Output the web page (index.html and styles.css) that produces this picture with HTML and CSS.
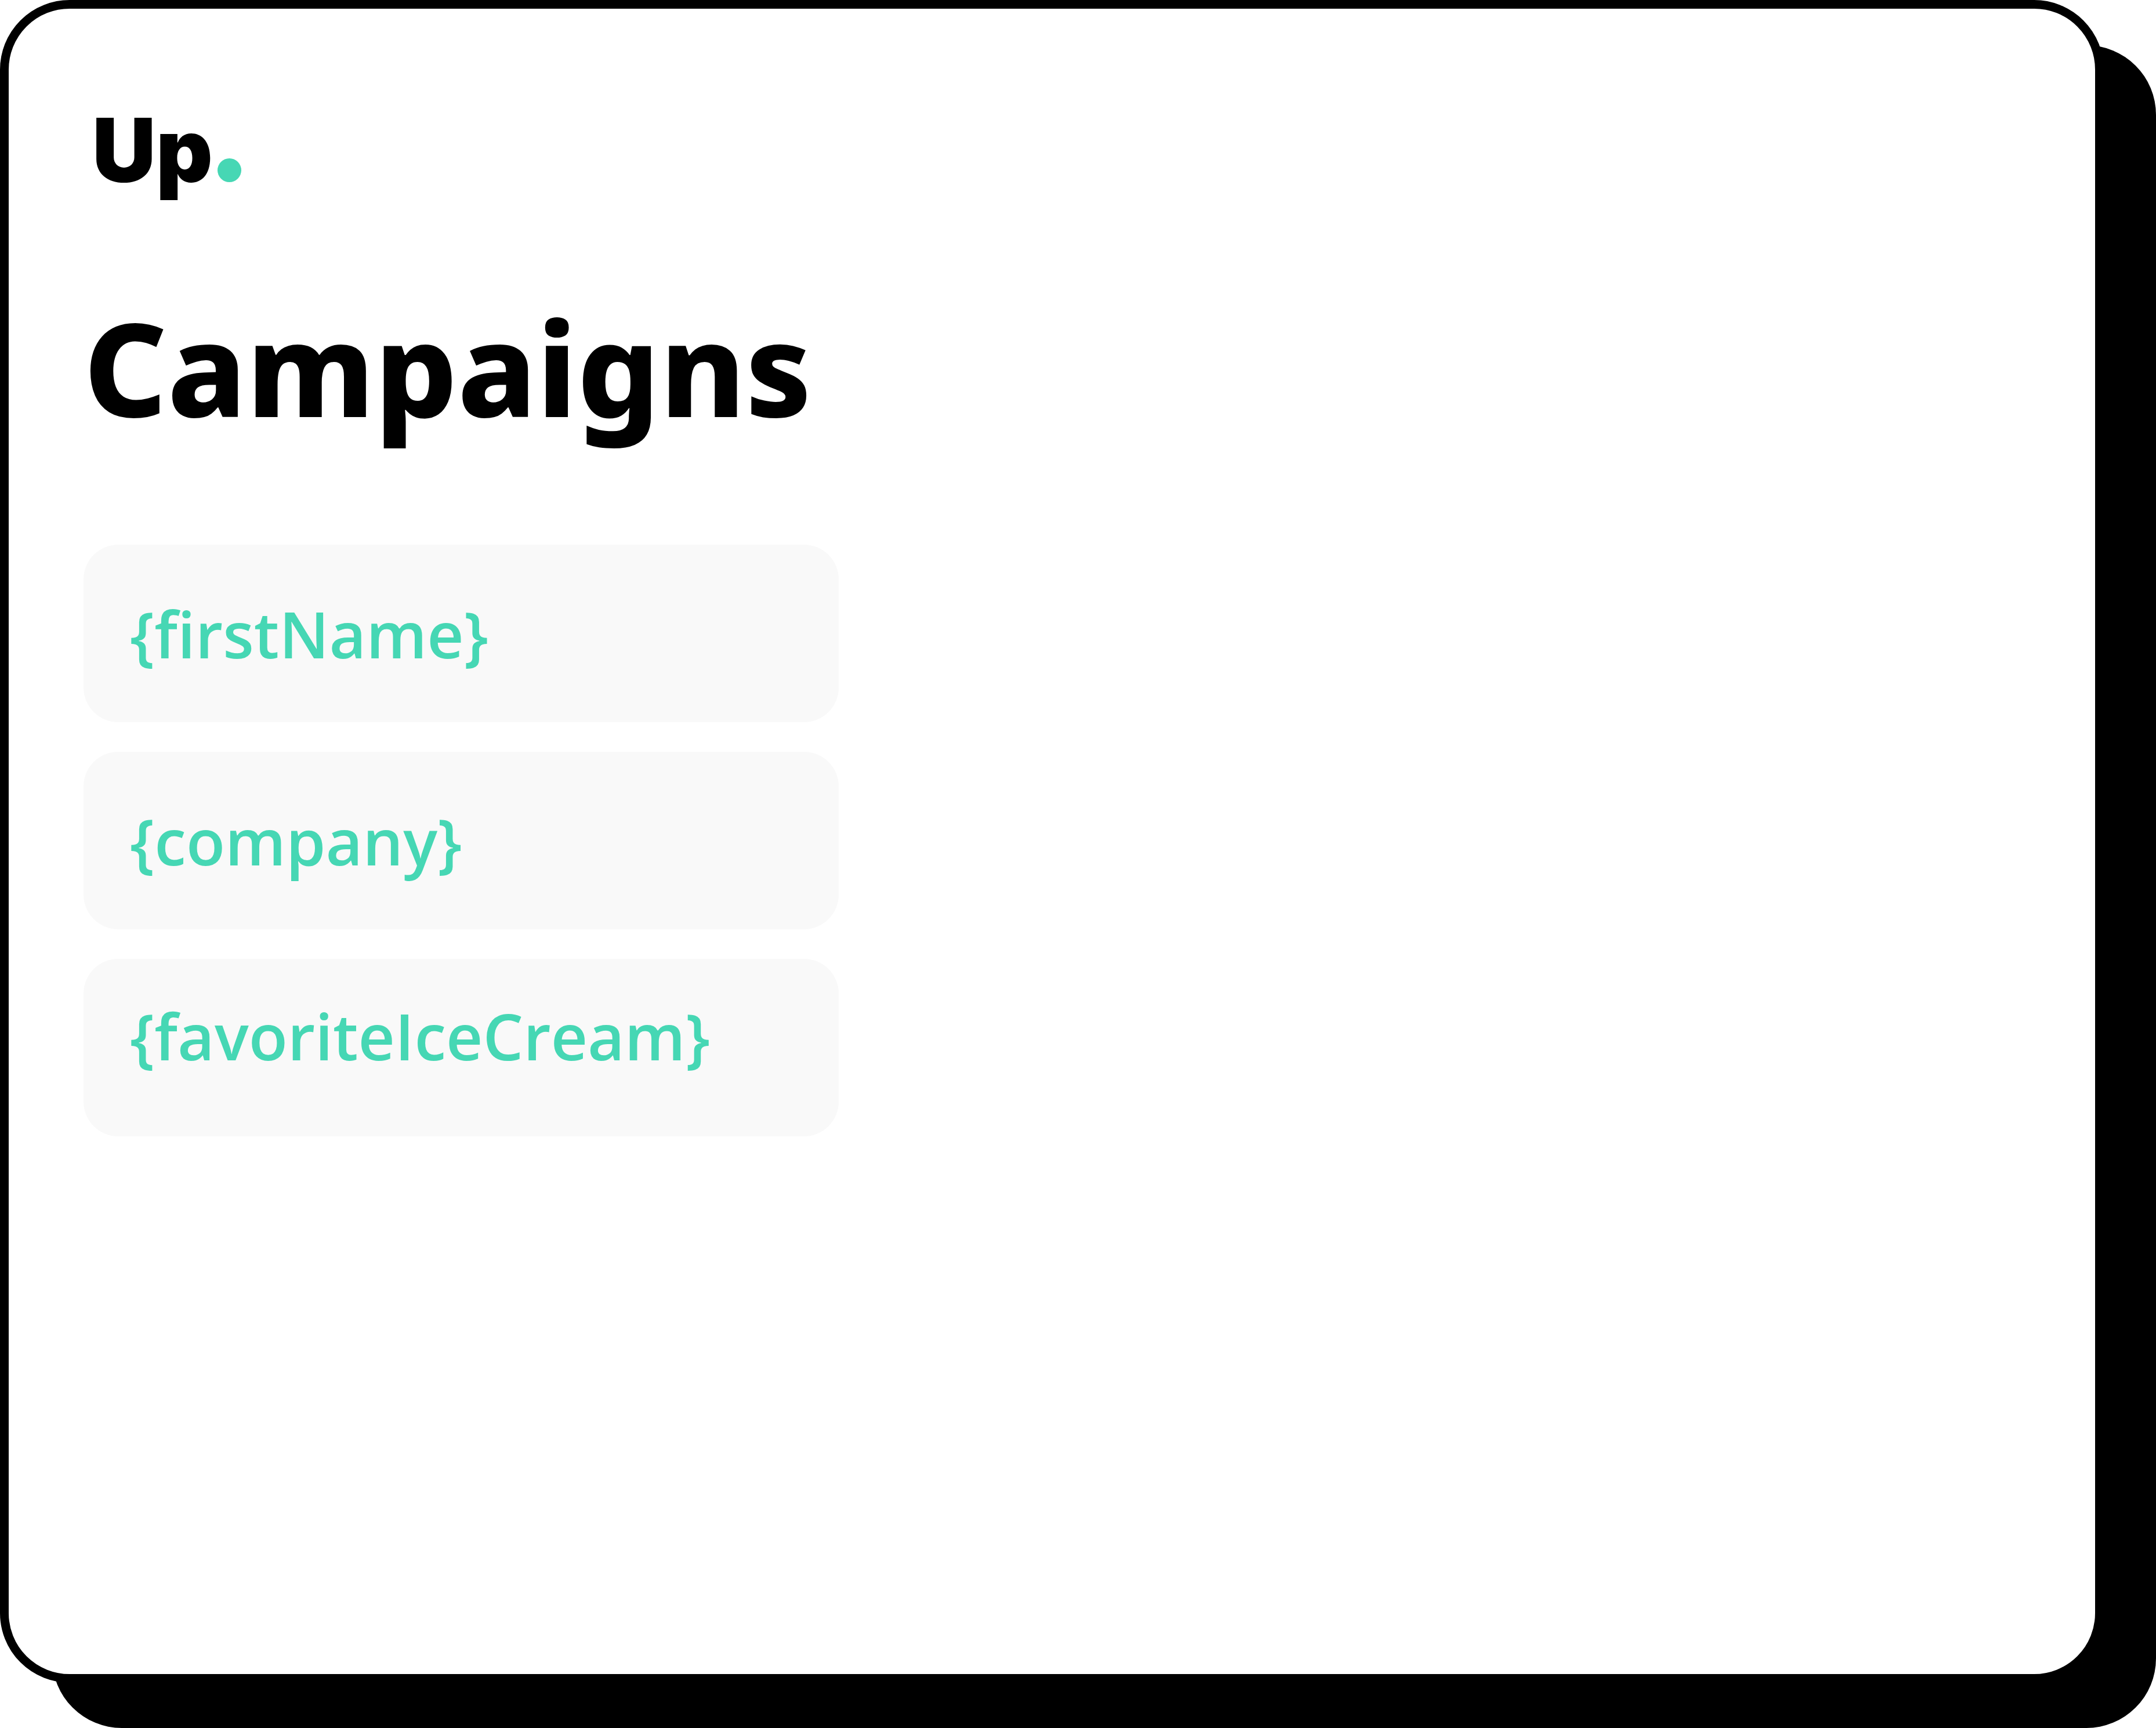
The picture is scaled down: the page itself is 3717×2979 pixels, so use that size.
FILE: index.html
```html
<!DOCTYPE html>
<html lang="en">
<head>
    <meta charset="UTF-8">
    <meta name="viewport" content="width=device-width, initial-scale=1.0">
    <title>Campaigns</title>
    <link rel="stylesheet" href="styles.css">
</head>
<body>
    <main class="window">
        <div class="logo">
            <span class="logo-text">Up</span>
            <span class="logo-dot"></span>
        </div>

        <h1 class="title">Campaigns</h1>

        <ul class="fields">
            <li class="field">{firstName}</li>
            <li class="field">{company}</li>
            <li class="field">{favoriteIceCream}</li>
        </ul>
    </main>
</body>
</html>
```
FILE: styles.css
```css
:root {
    --background: #ffffff;
    --foreground: #000000;
    --accent: #46d7b4;
    --field-bg: #f9f9f9;
    --shadow-x: 90px;
    --shadow-y: 78px;
}

* {
    margin: 0;
    padding: 0;
    box-sizing: border-box;
}

body {
    background-color: var(--background);
    color: var(--foreground);
    font-family: "Open Sans", sans-serif;
    display: flex;
    min-height: 100vh;
}

.window {
    flex: 1;
    margin: 0 var(--shadow-x) var(--shadow-y) 0;
    padding: 168px 129px;
    background: var(--background);
    border: 15px solid var(--foreground);
    border-radius: 120px;
    box-shadow: var(--shadow-x) var(--shadow-y) 0 var(--foreground);
}

/* logo */
.logo {
    display: flex;
    align-items: baseline;
    gap: 8px;
    padding-left: 15px;
}

.logo-text {
    font-family: Inter, sans-serif;
    font-size: 152px;
    font-weight: 900;
    line-height: 152px;
}

.logo-dot {
    width: 41px;
    height: 41px;
    border-radius: 50%;
    background: var(--accent);
}

.title {
    margin-top: 186px;
    font-family: "Noto Sans", sans-serif;
    font-size: 224px;
    font-weight: 800;
    line-height: 224px;
}

/* merge fields */
.fields {
    display: flex;
    flex-direction: column;
    gap: 51px;
    max-width: 1302px;
    margin-top: 194px;
    list-style: none;
}

.field {
    padding: 97px 80px;
    border-radius: 60px;
    background: var(--field-bg);
    color: var(--accent);
    font-size: 110px;
    font-weight: 600;
    line-height: 112px;
}

.field:last-child {
    padding-top: 76px;
    padding-bottom: 118px;
}
```
